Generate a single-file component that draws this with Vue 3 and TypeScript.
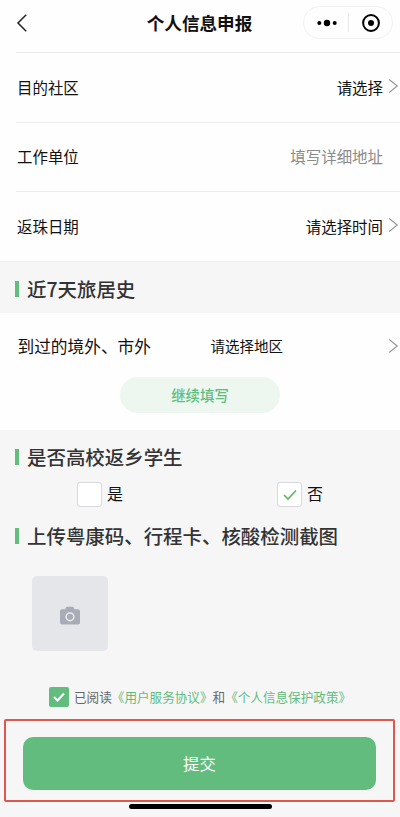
<script setup lang="ts">
import { ref } from 'vue'

interface Field {
  label: string
  value: string
  placeholder: boolean
}

const fields: Field[] = [
  { label: '目的社区', value: '请选择', placeholder: false },
  { label: '工作单位', value: '填写详细地址', placeholder: true },
  { label: '返珠日期', value: '请选择时间', placeholder: false },
]
const options: string[] = ['是', '否']
const student = ref<string>('否')
const agreed = ref<boolean>(true)
</script>

<template>
  <main class="page">
    <header class="nav">
      <svg class="back" width="12" height="20" viewBox="0 0 12 20"><path d="M10.2 1.8 2 10l8.2 8.2" /></svg>
      <h1 class="title">个人信息申报</h1>
      <div class="capsule">
        <svg class="dots" width="20" height="8" viewBox="0 0 20 8">
          <circle cx="2.3" cy="4" r="2" /><circle cx="10" cy="4" r="3.2" /><circle cx="17.7" cy="4" r="2" />
        </svg>
        <i class="divider"></i>
        <svg class="target" width="20" height="20" viewBox="0 0 20 20">
          <circle class="ring" cx="10" cy="10" r="7.9" /><circle cx="10" cy="10" r="3" />
        </svg>
      </div>
    </header>

    <section class="fields">
      <div v-for="f in fields" :key="f.label" class="field">
        <span class="label">{{ f.label }}</span>
        <span class="value" :class="{ placeholder: f.placeholder }">{{ f.value }}</span>
        <svg v-if="!f.placeholder" class="chevron" width="11" height="16" viewBox="0 0 11 16"><path d="M1.2 1.5 9.2 8l-8 6.5" /></svg>
      </div>
    </section>

    <h2 class="heading travel">近7天旅居史</h2>
    <section class="history">
      <div class="trip">
        <span class="trip-label">到过的境外、市外</span>
        <span class="trip-value">请选择地区</span>
        <svg class="chevron" width="11" height="16" viewBox="0 0 11 16"><path d="M1.2 1.5 9.2 8l-8 6.5" /></svg>
      </div>
      <button class="more">继续填写</button>
    </section>

    <h2 class="heading student-heading">是否高校返乡学生</h2>
    <div class="options">
      <div v-for="o in options" :key="o" class="option" @click="student = o">
        <span class="box">
          <svg v-if="student === o" width="14" height="12" viewBox="0 0 14 12"><path d="m1 6 4 4L13 1.5" /></svg>
        </span>
        <span class="option-text">{{ o }}</span>
      </div>
    </div>

    <h2 class="heading upload-heading">上传粤康码、行程卡、核酸检测截图</h2>
    <div class="upload">
      <svg width="22" height="20" viewBox="0 0 22 20">
        <path class="body" d="M3 3.2h3.1l1-1.9Q7.4.8 8 .8h5.6q.6 0 .9.5l1 1.9H19q2 0 2 2v11.3q0 2-2 2H3q-2 0-2-2V5.200q0-2 2-2Z" />
        <circle class="lens" cx="11" cy="10.8" r="3.9" />
      </svg>
    </div>

    <div class="agreement">
      <span class="agree-box" @click="agreed = !agreed">
        <svg v-if="agreed" width="12" height="10" viewBox="0 0 12 10"><path d="m1 5 3.500 3.500L11 1.500" /></svg>
      </span>
      <p class="terms">已阅读<a>《用户服务协议》</a>和<a>《个人信息保护政策》</a></p>
    </div>

    <div class="highlight"><button class="submit">提交</button></div>
    <div class="home"></div>
  </main>
</template>

<style>
body {
  margin: 0;
  background: #f6f6f6;
}
</style>

<style scoped>
* {
  box-sizing: border-box;
}
.page {
  width: 400px;
  height: 817px;
  overflow: hidden;
  display: flex;
  flex-direction: column;
  background: #f6f6f6;
  color: #111;
  font-family: "Noto Sans CJK SC", sans-serif;
}
svg {
  display: block;
  flex: none;
}
button {
  border: 0;
  padding: 0;
  font-family: inherit;
}
.nav {
  height: 52px;
  flex: none;
  display: grid;
  grid-template-columns: 96px 1fr 96px;
  padding: 0 0 7px;
  align-items: center;
  background: #fefefe;
}
.back {
  margin-left: 16px;
}
.back path {
  fill: none;
  stroke: #222;
  stroke-width: 1.5;
}
.title {
  margin: 0;
  padding-right: 1px;
  text-align: center;
  font-size: 17.6px;
  line-height: 26px;
  font-weight: 700;
  white-space: nowrap;
}
.capsule {
  width: 90px;
  height: 33px;
  margin-left: -1px;
  display: flex;
  align-items: center;
  border: 1px solid #f0f0f0;
  border-radius: 17px;
}
.dots {
  margin-left: 13px;
}
.divider {
  width: 1px;
  height: 19px;
  margin: 0 12px 0 11px;
  background: #e8e8e8;
}
.ring {
  fill: none;
  stroke: #000;
  stroke-width: 2;
}
.fields {
  height: 209px;
  flex: none;
  display: grid;
  grid-template-rows: 70px 69px 70px;
  padding-left: 16px;
  background: #fefefe;
}
.field {
  display: flex;
  align-items: center;
  border-top: 1px solid #ebebeb;
  padding: 0 0 2px 1px;
  font-size: 15.45px;
}
.value {
  margin-left: auto;
}
.value:last-child {
  margin-right: 17px;
}
.placeholder {
  color: #8b8b8b;
}
.chevron {
  margin: 0 1px 2px 5px;
}
.chevron path {
  fill: none;
  stroke: #999;
  stroke-width: 1.2;
}
.heading {
  display: flex;
  align-items: center;
  gap: 8px;
  height: 52px;
  flex: none;
  margin: 0;
  padding: 3px 0 0 15px;
  color: #333;
  font-size: 19.45px;
  line-height: 30px;
  font-weight: 500;
  white-space: nowrap;
}
.heading::before {
  content: "";
  width: 4px;
  height: 16px;
  background: #62bc7e;
}
.travel {
  border-top: 1px solid #eee;
}
.history {
  height: 117px;
  flex: none;
  display: flex;
  flex-direction: column;
  align-items: center;
  background: #fefefe;
}
.trip {
  width: 100%;
  height: 64px;
  display: grid;
  grid-template-columns: 193px 1fr auto;
  align-items: center;
  padding: 2px 0 0 17.5px;
}
.trip-label {
  font-size: 16.7px;
}
.trip-value {
  padding-bottom: 2px;
  font-size: 14.5px;
}
.trip .chevron {
  margin-bottom: 0;
}
.more {
  width: 160px;
  height: 36px;
  padding-bottom: 2px;
  border-radius: 18px;
  background: #edf7f0;
  color: #62bc7e;
  font-size: 14.4px;
  font-weight: 500;
}
.student-heading {
  padding-top: 2px;
}
.options {
  display: grid;
  grid-template-columns: 200px 1fr;
  height: 25px;
  flex: none;
  padding-left: 77px;
}
.option {
  display: flex;
  align-items: center;
  gap: 5px;
  font-size: 16px;
}
.option-text {
  line-height: 23px;
  padding-bottom: 2px;
}
.box {
  width: 25px;
  height: 25px;
  display: flex;
  align-items: center;
  justify-content: center;
  border: 1px solid #d9d9dd;
  border-radius: 3px;
  background: #fff;
}
.box path {
  fill: none;
  stroke: #5cb85c;
  stroke-width: 1.6;
}
.upload-heading {
  height: 54px;
}
.upload {
  width: 76px;
  height: 75px;
  flex: none;
  display: flex;
  align-items: center;
  justify-content: center;
  margin: 15px 0 0 32px;
  padding-top: 4px;
  border-radius: 5px;
  background: #e4e6ea;
}
.body {
  fill: #a9abb7;
}
.lens {
  fill: none;
  stroke: #e9ebef;
  stroke-width: 1.5;
}
.agreement {
  height: 20px;
  flex: none;
  display: flex;
  align-items: center;
  margin: 36px 0 0 49px;
}
.terms {
  margin: 0;
  padding-bottom: 2px;
  color: #666;
  font-size: 12.6px;
  white-space: nowrap;
}
.terms a {
  color: #62bc7e;
}
.agree-box {
  width: 20px;
  height: 20px;
  display: flex;
  align-items: center;
  justify-content: center;
  margin-right: 5px;
  border-radius: 2px;
  background: #62bc7e;
}
.agree-box path {
  fill: none;
  stroke: #fff;
  stroke-width: 2;
}
.highlight {
  width: 391px;
  height: 83px;
  flex: none;
  display: flex;
  justify-content: center;
  align-items: center;
  margin: 12px 0 0 4px;
  padding: 5px 0 0;
  border: 2px solid #dc584f;
  border-radius: 2px;
}
.submit {
  width: 353px;
  height: 53px;
  border-radius: 10px;
  background: #62bc7e;
  color: #fff;
  font-size: 16.4px;
}
.home {
  width: 143px;
  height: 5px;
  flex: none;
  margin: 2px 0 0 129px;
  border-radius: 3px;
  background: #000;
}
</style>
